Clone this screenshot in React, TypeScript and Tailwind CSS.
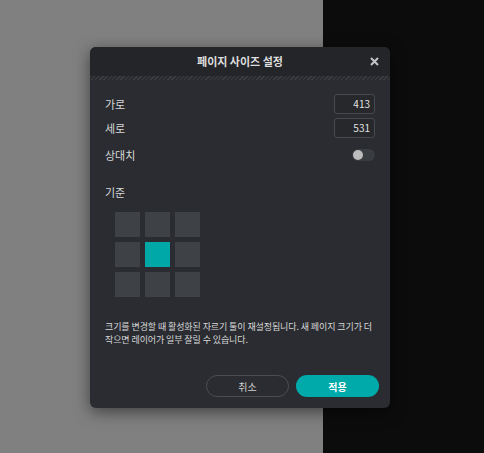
import React from "react";

export default function App() {
  const cells = [0, 1, 2, 3, 4, 5, 6, 7, 8];
  return (
    <div
      className="relative w-[484px] h-[453px] flex overflow-hidden"
      style={{ fontFamily: '"Noto Sans CJK KR", "Noto Sans", sans-serif' }}
    >
      <div className="w-[323px] h-full bg-[#808080]" />
      <div className="flex-1 h-full bg-[#0c0c0c]" />

      <div className="absolute left-[90px] top-[47px] w-[300px] h-[361px] rounded-[6px] bg-[#2a2c31] overflow-hidden flex flex-col shadow-[0_4px_16px_rgba(0,0,0,0.5)]">
        <div className="relative h-[29px] bg-[#232529] flex items-center justify-center">
          <span className="text-[11px] font-bold text-[#dedede] leading-none">페이지 사이즈 설정</span>
          <button className="absolute right-[11px] top-[10px] w-[9px] h-[9px] flex items-center justify-center">
            <svg width="9" height="9" viewBox="0 0 9 9">
              <path d="M1 1L8 8M8 1L1 8" stroke="#c4c4c4" strokeWidth="2" strokeLinecap="butt" />
            </svg>
          </button>
        </div>
        <div className="h-[4px] bg-[repeating-linear-gradient(135deg,#3a3d42_0px,#3a3d42_1px,#2a2c31_1px,#2a2c31_3px)]" />

        <div className="flex flex-col px-[15px] pt-[14px] flex-1">
          <div className="flex items-center justify-between h-[20px]">
            <span className="text-[11px] text-[#d8d8d8]">가로</span>
            <div className="w-[41px] h-[20px] rounded-[3px] border border-[#46494e] bg-[#26282c] flex items-center justify-end pr-[4px]">
              <span className="text-[10px] text-[#e0e0e0] leading-none">413</span>
            </div>
          </div>
          <div className="flex items-center justify-between h-[20px] mt-[4px]">
            <span className="text-[11px] text-[#d8d8d8]">세로</span>
            <div className="w-[41px] h-[20px] rounded-[3px] border border-[#46494e] bg-[#26282c] flex items-center justify-end pr-[4px]">
              <span className="text-[10px] text-[#e0e0e0] leading-none">531</span>
            </div>
          </div>
          <div className="flex items-center justify-between h-[20px] mt-[7px]">
            <span className="text-[11px] text-[#d8d8d8]">상대치</span>
            <div className="w-[23px] h-[12px] rounded-full bg-[#393c41] flex items-center pl-[1px]">
              <div className="w-[10px] h-[10px] rounded-full bg-[#bdbdbd]" />
            </div>
          </div>

          <div className="mt-[20px] h-[14px] flex items-center">
            <span className="text-[11px] text-[#d8d8d8]">기준</span>
          </div>

          <div className="mt-[13px] ml-[10px] grid grid-cols-[25px_25px_25px] grid-rows-[25px_25px_25px] gap-[5px] w-max">
            {cells.map((i) => (
              <div key={i} className={i === 4 ? "bg-[#00a8a8]" : "bg-[#3e4146]"} />
            ))}
          </div>

          <p className="mt-[23px] mr-[-8px] text-[9px] leading-[13px] tracking-[-0.1px] break-keep text-[#d8d8d8]">
            크기를 변경할 때 활성화된 자르기 툴이 재설정됩니다. 새 페이지 크기가 더 작으면 레이어가 일부 잘릴 수 있습니다.
          </p>
        </div>

        <div className="flex justify-end gap-[7px] pr-[11px] pb-[11px]">
          <button className="w-[83px] h-[22px] rounded-full border border-[#4a4d52] text-[10px] text-[#d0d0d0] flex items-center justify-center">
            취소
          </button>
          <button className="w-[83px] h-[22px] rounded-full bg-[#00aaaa] text-[10px] font-bold text-white flex items-center justify-center">
            적용
          </button>
        </div>
      </div>
    </div>
  );
}
